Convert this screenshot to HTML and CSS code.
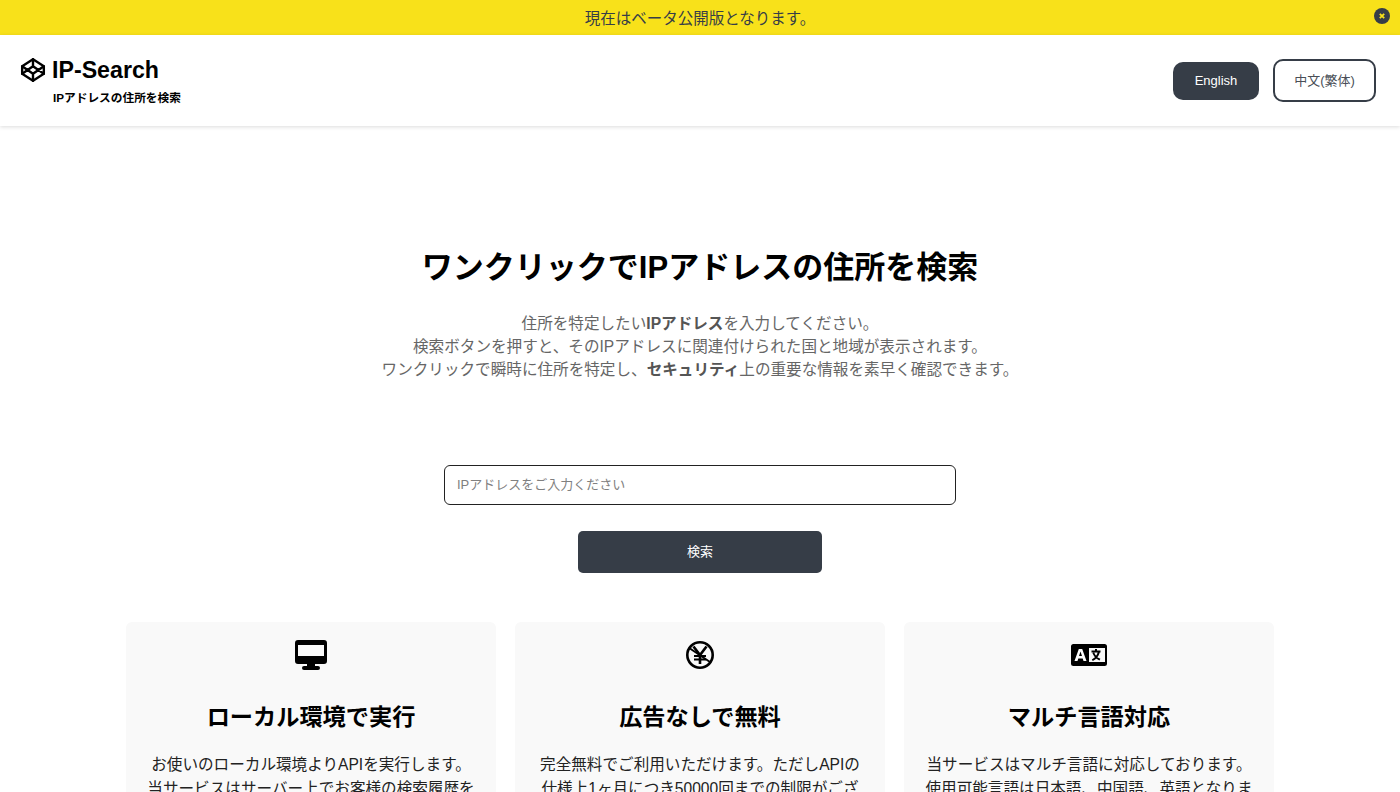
FILE: index.html
```html
<!DOCTYPE html>
<html lang="ja">
<head>
<meta charset="utf-8">
<title>IP-Search</title>
<link rel="stylesheet" href="styles.css">
</head>
<body>
<div class="banner">
  <span>現在はベータ公開版となります。</span>
  <button class="banner-close" aria-label="閉じる">
    <svg viewBox="0 0 16 16" width="16" height="16"><circle cx="8" cy="8" r="8" fill="#363d47"/><path d="M5.800 5.800l4.400 4.400M10.200 5.800l-4.400 4.400" stroke="#f8e11a" stroke-width="1.800" fill="none"/></svg>
  </button>
</div>
<header class="header">
  <div class="brand">
    <div class="brand-row">
      <svg class="brand-logo" viewBox="0 0 24 24" width="26" height="26" fill="none" stroke="#000" stroke-width="2.200" stroke-linejoin="round" stroke-linecap="round">
        <path d="M12 2l10 6.500v7L12 22 2 15.500v-7L12 2z"/>
        <path d="M12 22v-6.500M22 8.500l-10 7-10-7M2 15.500l10-7 10 7M12 2v6.500"/>
      </svg>
      <span class="brand-name">IP-Search</span>
    </div>
    <div class="brand-sub">IPアドレスの住所を検索</div>
  </div>
  <nav class="langs">
    <button class="lang lang-on">English</button>
    <button class="lang lang-off">中文(繁体)</button>
  </nav>
</header>
<main class="main">
  <section class="hero">
    <h1>ワンクリックでIPアドレスの住所を検索</h1>
    <p>住所を特定したい<b>IPアドレス</b>を入力してください。<br>検索ボタンを押すと、そのIPアドレスに関連付けられた国と地域が表示されます。<br>ワンクリックで瞬時に住所を特定し、<b>セキュリティ</b>上の重要な情報を素早く確認できます。</p>
  </section>
  <form class="search">
    <input class="search-input" type="text" placeholder="IPアドレスをご入力ください">
    <button class="search-btn" type="button">検索</button>
  </form>
  <section class="cards">
    <article class="card">
      <svg class="icon" viewBox="0 0 34 30" width="34" height="30"><path fill-rule="evenodd" d="M4 0h26a3 3 0 0 1 3 3v18a3 3 0 0 1-3 3H4a3 3 0 0 1-3-3V3a3 3 0 0 1 3-3zM4 5v11h26V5z"/><path d="M13 23h8v4h-8z"/><rect x="8" y="26" width="18" height="4" rx="2"/></svg>
      <h2>ローカル環境で実行</h2>
      <p>お使いのローカル環境よりAPIを実行します。<br>当サービスはサーバー上でお客様の検索履歴を保存することはありません。</p>
    </article>
    <article class="card">
      <svg class="icon" viewBox="0 0 30 30" width="30" height="30" fill="none" stroke="#000"><circle cx="15" cy="15" r="12.700" stroke-width="2.600"/><path d="M8.500 6.500l6.500 8.500 6.500-8.500M15 15v9" stroke-width="2.600"/><path d="M9 16h12M9 19.500h12" stroke-width="2"/><path d="M5 8.500l20 13.500" stroke-width="2"/></svg>
      <h2>広告なしで無料</h2>
      <p>完全無料でご利用いただけます。ただしAPIの仕様上1ヶ月につき50000回までの制限がございます。</p>
    </article>
    <article class="card">
      <svg class="icon" viewBox="0 0 36 30" width="36" height="30"><path fill-rule="evenodd" d="M2.500 4h31a2.500 2.500 0 0 1 2.500 2.500v17a2.500 2.500 0 0 1-2.500 2.500h-31A2.500 2.500 0 0 1 0 23.500v-17A2.500 2.500 0 0 1 2.500 4zM18 8v14h16V8z"/><path fill="#fff" d="M7.800 9h3.400l4.300 12h-3l-.8-2.500H7.300L6.500 21h-3zM8 16h3l-1.500-4.500z"/><path d="M20.500 10.500h9v2h-9zM24 9h2v2h-2zM26.800 12l2 .5c-1.200 4-3.400 6.600-7 8.500l-1-1.600c3.200-1.500 5-4 6-7.400zM23.200 12.500c1 2.700 3 5 6.200 6.300l-1 1.700c-3.500-1.600-5.700-4.200-7-7.500z"/></svg>
      <h2>マルチ言語対応</h2>
      <p>当サービスはマルチ言語に対応しております。<br>使用可能言語は日本語、中国語、英語となります。</p>
    </article>
  </section>
</main>
</body>
</html>
```
FILE: styles.css
```css
html, body {
  margin: 0;
  padding: 0;
  overflow: hidden;
  height: 792px;
}
body {
  background: #fff;
  color: #000;
  font-family: "Liberation Sans", "Noto Sans CJK JP", sans-serif;
}
button, input {
  font-family: inherit;
}
.banner {
  position: relative;
  height: 35px;
  padding-bottom: 2px;
  box-sizing: border-box;
  background: #f8e11a;
  color: #363d47;
  display: flex;
  align-items: center;
  justify-content: center;
  font-size: 15.500px;
}
.banner-close {
  position: absolute;
  right: 10px;
  top: 8px;
  width: 16px;
  height: 16px;
  padding: 0;
  border: 0;
  background: none;
  display: flex;
}
.header {
  height: 91px;
  box-sizing: border-box;
  padding: 0 24px 0 20px;
  display: flex;
  align-items: center;
  justify-content: space-between;
  box-shadow: 0 1px 4px rgba(0,0,0,.14);
  position: relative;
}
.brand-row {
  display: flex;
  align-items: center;
  gap: 6px;
}
.brand-name {
  font-size: 23.200px;
  font-weight: 700;
  line-height: 28px;
}
.brand-sub {
  margin: 6px 0 0 33px;
  font-size: 11.700px;
  font-weight: 700;
  line-height: 16px;
}
.langs {
  display: flex;
  align-items: center;
  gap: 14px;
}
.lang {
  font-size: 13px;
  border-radius: 10px;
  box-sizing: border-box;
}
.lang-on {
  width: 86px;
  height: 38px;
  background: #363d47;
  border: 0;
  color: #fff;
}
.lang-off {
  width: 103px;
  height: 43px;
  background: #fff;
  border: 2px solid #363d47;
  color: #4a4f57;
  padding-bottom: 3px;
}
.main {
  display: flex;
  flex-direction: column;
  align-items: center;
}
.hero {
  margin-top: 121px;
  text-align: center;
}
.hero h1 {
  margin: 0;
  font-size: 31px;
  line-height: 42px;
  font-weight: 700;
}
.hero p {
  margin: 23px 0 0;
  font-size: 15.600px;
  line-height: 23px;
  color: #666;
}
.hero b {
  color: #555;
}
.search {
  margin-top: 84px;
  display: flex;
  flex-direction: column;
  align-items: center;
  gap: 26px;
}
.search-input {
  width: 512px;
  height: 40px;
  box-sizing: border-box;
  padding: 0 12px 2px;
  border: 1px solid #222;
  border-radius: 6px;
  font-size: 13px;
  outline: none;
}
.search-input::placeholder {
  color: #808080;
}
.search-btn {
  width: 244px;
  height: 42px;
  padding-bottom: 5px;
  background: #363d47;
  border: 0;
  border-radius: 5px;
  color: #fff;
  font-size: 13px;
}
.cards {
  margin-top: 49px;
  display: grid;
  grid-template-columns: repeat(3, 370px);
  column-gap: 19px;
}
.card {
  background: #f9f9f9;
  border-radius: 6px;
  padding: 18px 20px 24px;
  text-align: center;
  display: flex;
  flex-direction: column;
  align-items: center;
}
.card h2 {
  margin: 31px 0 0;
  font-size: 23.200px;
  line-height: 32px;
  font-weight: 700;
}
.card p {
  margin: 20px 0 0;
  font-size: 15.600px;
  line-height: 24px;
  color: #222;
}
```
